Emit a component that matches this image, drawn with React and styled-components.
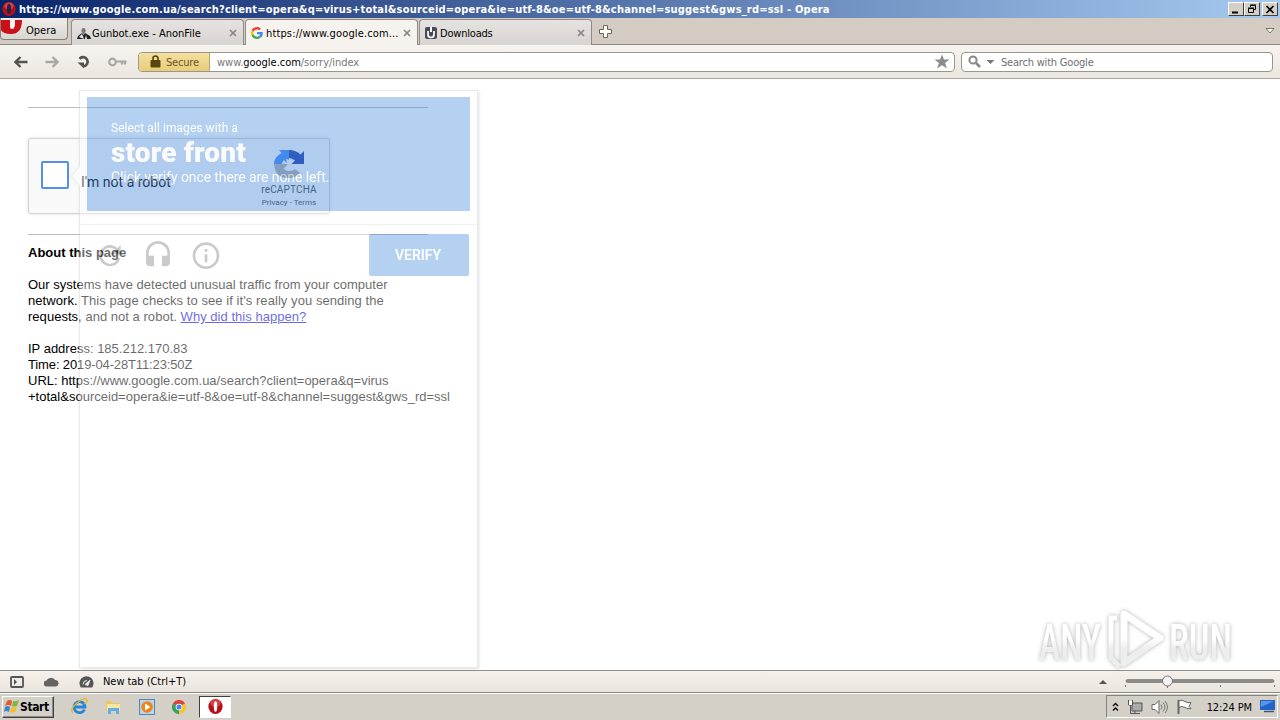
import styled, { createGlobalStyle } from "styled-components";

const OperaO = ({ size = 14 }) => (
  <svg width={size} height={size} viewBox="0 0 16 16">
    <ellipse cx="8" cy="8" rx="7.6" ry="7.9" fill="#b80f17" />
    <ellipse cx="8" cy="4.5" rx="5.5" ry="4" fill="#e86060" opacity=".6" />
    <ellipse cx="8" cy="8" rx={size > 14 ? 1.8 : 2.4} ry="5.6" fill={size > 14 ? "#fff" : "#20254f"} />
  </svg>
);

const GoogleG = () => (
  <svg width="12" height="12" viewBox="0 0 48 48">
    <path fill="#ea4335" d="M24 9.5c3.5 0 6.7 1.2 9.2 3.6l6.9-6.9C35.9 2.4 30.5 0 24 0 14.6 0 6.5 5.4 2.6 13.2l8 6.2C12.4 13.7 17.7 9.5 24 9.5z" />
    <path fill="#4285f4" d="M47 24.6c0-1.6-.2-3.1-.4-4.6H24v9h12.9c-.6 3-2.3 5.5-4.8 7.2l7.7 6C44.4 38 47 31.8 47 24.6z" />
    <path fill="#fbbc05" d="M10.5 28.6a14.5 14.5 0 0 1 0-9.2l-8-6.2a24 24 0 0 0 0 21.6l8-6.2z" />
    <path fill="#34a853" d="M24 48c6.5 0 11.9-2.1 15.9-5.8l-7.7-6c-2.2 1.5-4.9 2.3-8.2 2.3-6.3 0-11.6-4.2-13.5-9.9l-8 6.2C6.5 42.6 14.6 48 24 48z" />
  </svg>
);

const AnonIcon = () => (
  <svg width="14" height="13" viewBox="0 0 14 13">
    <path d="M4.5 3a2 2 0 0 1 4 0v2l-2 2-2-2z" fill="#777" />
    <path d="M0 12l1-3 4-3 1.500 2L8 6l5 3 1 3z" fill="#222" />
    <path d="M2 10l3-3 2 5zM8 12l1-4 1 4z" fill="#eee" />
  </svg>
);

const Close = () => (
  <svg width="8" height="8" viewBox="0 0 8 8">
    <path d="M1 1l6 6M7 1L1 7" stroke="#858585" strokeWidth="1.7" />
  </svg>
);

const Arrow = ({ flip, color }) => (
  <svg width="14" height="12" viewBox="0 0 14 12">
    <path transform={flip ? "translate(14 0) scale(-1 1)" : undefined} d="M13.5 6H2M6.5 1L1.5 6l5 5" fill="none" stroke={color} strokeWidth="2.3" />
  </svg>
);

const TABS = [
  { name: "Gunbot.exe - AnonFile", icon: <AnonIcon />, spacing: 0 },
  { name: "https://www.google.com...", icon: <GoogleG />, active: true, spacing: 0.14 },
  {
    name: "Downloads",
    spacing: -0.2,
    icon: (
      <svg width="12" height="12" viewBox="0 0 12 12">
        <rect width="12" height="12" rx="2" fill="#454b57" />
        <path d="M3 4v3.500a3 3 0 0 0 6 0V4" stroke="#fff" strokeWidth="1.7" fill="none" />
        <path d="M5 0h2v5H5z" fill="#fff" />
      </svg>
    ),
  },
];

function TitleBar() {
  return (
    <Title>
      <OperaO />
      <TitleText>https://www.google.com.ua/search?client=opera&amp;q=virus+total&amp;sourceid=opera&amp;ie=utf-8&amp;oe=utf-8&amp;channel=suggest&amp;gws_rd=ssl - Opera</TitleText>
      <WinButton><svg width="10" height="9"><path d="M1 7.500h6" stroke="#000" strokeWidth="2" /></svg></WinButton>
      <WinButton>
        <svg width="10" height="10">
          <path d="M3.5 3V1.500h5v4H7M3 1h6M1.500 4.500h5v4h-5zM1 4h6" fill="none" stroke="#000" />
        </svg>
      </WinButton>
      <WinButton $gap><svg width="10" height="9"><path d="M1.5 1l7 7M8.500 1l-7 7" stroke="#000" strokeWidth="1.6" /></svg></WinButton>
    </Title>
  );
}

function TabBar() {
  return (
    <TabStrip>
      <OperaMenu>
        <svg width="21" height="15" viewBox="0 0 21 15">
          <path d="M0 0h9v5q0 4 2 4t3-4V0h7q0 14-11 14Q2 14 0 10z" fill="#cc1018" />
          <path d="M9 0h4.500v5q0 4-2.300 4T9 5z" fill="#f6f3f0" />
        </svg>
        <Label>Opera</Label>
      </OperaMenu>
      {TABS.map((tab) => (
        <Tab key={tab.name} $active={tab.active}>
          <TabIcon>{tab.icon}</TabIcon>
          <TabName $spacing={tab.spacing}>{tab.name}</TabName>
          <Close />
        </Tab>
      ))}
      <NewTab>
        <svg width="13" height="13"><path d="M4.5.5h4v4h4v4h-4v4h-4v-4h-4v-4h4z" fill="#fffff4" stroke="#666" /></svg>
      </NewTab>
      <svg width="10" height="8"><path d="M1 1.500h8L5 6z" fill="#fffff0" stroke="#777766" /></svg>
    </TabStrip>
  );
}

function AddressBar() {
  return (
    <Toolbar>
      <NavIcons>
        <Arrow color="#55524e" />
        <Arrow flip color="#aaa7a2" />
        <svg width="15" height="14" viewBox="0 0 15 14">
          <path d="M3.5 3.800A4.600 4.600 0 1 1 7.500 11.300" fill="none" stroke="#55524e" strokeWidth="2.6" />
          <path d="M1.500 7.500h6.500v6z" fill="#55524e" />
        </svg>
        <svg width="19" height="10" viewBox="0 0 19 10">
          <circle cx="4.500" cy="5" r="3.300" fill="none" stroke="#aaa7a2" strokeWidth="2.2" />
          <path d="M8 4.500h10.500M14 5v2.500M17 5v2.500" stroke="#aaa7a2" strokeWidth="2.2" />
        </svg>
      </NavIcons>
      <UrlField>
        <Secure>
          <svg width="11" height="13" viewBox="0 0 11 13">
            <path d="M3 6V3.500a2.500 2.500 0 0 1 5 0V6" fill="none" stroke="#594711" strokeWidth="1.6" />
            <rect x=".5" y="5" width="10" height="7.500" rx="1" fill="#594711" />
          </svg>
          <Label $color="#675626" $spacing={-0.2}>Secure</Label>
        </Secure>
        <Url>www.<b>google.com</b>/sorry/index</Url>
        <svg width="16" height="15" viewBox="0 0 16 15">
          <path d="M8 .5l2 5h5.500L11 9l2 5.500-5-3.300-5 3.300L5 9 .5 5.500H6z" fill="#8c8c8c" />
        </svg>
      </UrlField>
      <SearchField>
        <svg width="14" height="14" viewBox="0 0 14 14">
          <circle cx="5" cy="5" r="3.600" fill="none" stroke="#888" strokeWidth="2" />
          <path d="M8 8l4 4" stroke="#888" strokeWidth="2.5" />
        </svg>
        <svg width="9" height="6"><path d="M.5 1h8L4.500 5z" fill="#777" /></svg>
        <Label $color="#707070" $spacing={-0.2}>Search with Google</Label>
      </SearchField>
    </Toolbar>
  );
}

const RecaptchaLogo = () => (
  <svg width="32" height="32" viewBox="0 0 32 32">
    <path d="M31 16V3l-3.500 3.500Q23 2 16 2v8q3 0 6 2.500L18.500 16z" fill="#1c3aa9" />
    <path d="M16 2H6l2.500 3Q1 9 1 16h8q0-2 2-4l2.500 3V10.500L16 12z" fill="#4285f4" />
    <path d="M1 16q1 14 14 14 8 0 12-5l-5-4q-2 2-6 2-4 0-5-2.500l4-4.500z" fill="#ababab" />
  </svg>
);

function Captcha() {
  return (
    <CaptchaBox>
      <CheckBox />
      <RobotText>I'm not a robot</RobotText>
      <Brand>
        <RecaptchaLogo />
        <BrandName>reCAPTCHA</BrandName>
        <BrandLinks>Privacy - Terms</BrandLinks>
      </Brand>
    </CaptchaBox>
  );
}

function Challenge() {
  return (
    <Popup>
      <Pointer viewBox="0 0 10 22"><path d="M10 1L1 11l9 10" fill="#fff" stroke="#ccc" /></Pointer>
      <Prompt>
        <PromptLine>Select all images with a</PromptLine>
        <PromptTarget>store front</PromptTarget>
        <PromptHint>Click verify once there are none left.</PromptHint>
      </Prompt>
      <Controls>
        <svg width="32" height="32" viewBox="0 0 24 24">
          <path d="M17.65 6.850A8 8 0 1 0 19.730 14.500h-2.080A6 6 0 1 1 12 6.500c1.660 0 3.140.69 4.220 1.780L13 11.500h7v-7z" fill="#808080" />
        </svg>
        <svg width="32" height="32" viewBox="0 0 24 24">
          <path d="M12 1.500a9 9 0 0 0-9 9v7a3 3 0 0 0 3 3h3v-8H5v-2a7 7 0 0 1 14 0v2h-4v8h3a3 3 0 0 0 3-3v-7a9 9 0 0 0-9-9z" fill="#808080" />
        </svg>
        <svg width="32" height="32" viewBox="0 0 24 24">
          <circle cx="12" cy="12.500" r="9" fill="none" stroke="#808080" strokeWidth="2" />
          <path d="M11 7.500h2v2h-2zM11 11.500h2v6h-2z" fill="#808080" />
        </svg>
        <Verify>VERIFY</Verify>
      </Controls>
    </Popup>
  );
}

function Page() {
  return (
    <PageArea>
      <Content>
        <Rule />
        <Captcha />
        <Rule />
        <Heading>About this page</Heading>
        <Line $spacing={0.01}>Our systems have detected unusual traffic from your computer</Line>
        <Line $spacing={0.06}>network. This page checks to see if it's really you sending the</Line>
        <Line $spacing={0.03}>requests, and not a robot. <a>Why did this happen?</a></Line>
        <Line />
        <Line>IP address: 185.212.170.83</Line>
        <Line $spacing={-0.13}>Time: 2019-04-28T11:23:50Z</Line>
        <Line>URL: https://www.google.com.ua/search?client=opera&amp;q=virus</Line>
        <Line $spacing={0.01}>+total&amp;sourceid=opera&amp;ie=utf-8&amp;oe=utf-8&amp;channel=suggest&amp;gws_rd=ssl</Line>
      </Content>
      <Challenge />
      <Watermark viewBox="0 0 204 68">
        <defs>
          <linearGradient id="fade" gradientUnits="userSpaceOnUse" x1="0" y1="0" x2="0" y2="68">
            <stop offset=".45" stopColor="#fff" />
            <stop offset=".6" stopColor="#ededed" />
          </linearGradient>
        </defs>
        <text x="5" y="52" textLength="62" lengthAdjust="spacingAndGlyphs">ANY</text>
        <path d="M90 6l36 24-36 25z" fill="none" stroke="url(#fade)" strokeWidth="7" strokeLinejoin="round" />
        <path d="M83 10h-6v40l9 9" fill="none" stroke="url(#fade)" strokeWidth="5" />
        <text x="135" y="52" textLength="63" lengthAdjust="spacingAndGlyphs">RUN</text>
      </Watermark>
    </PageArea>
  );
}

function StatusBar() {
  return (
    <Status>
      <StatusIcons>
        <svg width="14" height="12"><rect x="1" y="1" width="12" height="10" rx="1" fill="none" stroke="#555" strokeWidth="1.8" /><path d="M4 3l3 3-3 3z" fill="#555" /></svg>
        <svg width="15" height="11"><path d="M3 10.500a3 3 0 0 1-.5-6A5 5 0 0 1 11 4a3.300 3.300 0 0 1 1 6.500z" fill="#666462" /></svg>
        <svg width="15" height="12"><path d="M2 11.500A7 7 0 1 1 13 11.500z" fill="#555" /><path d="M6 8.500L11 4l-2 5.500z" stroke="#eee" fill="#eee" strokeWidth=".8" /><path d="M4 8.500a4 4 0 0 1 4-4" stroke="#eee" fill="none" /></svg>
      </StatusIcons>
      <Label $spacing={-0.05}>New tab (Ctrl+T)</Label>
      <Zoom>
        <svg width="8" height="5"><path d="M0 5l4-4 4 4z" fill="#555" /></svg>
        <svg width="152" height="18" viewBox="0 0 152 18">
          <rect x="2" y="6.500" width="148" height="3" rx="1.500" fill="#8c8a87" stroke="#716f6c" strokeWidth=".6" />
          <path d="M1.5 12v2M43.500 12v3M96.500 12v2M150.500 12v2" stroke="#777" />
          <circle cx="43.500" cy="8" r="5" fill="#f4f3f1" stroke="#777" />
        </svg>
      </Zoom>
    </Status>
  );
}

function Taskbar() {
  return (
    <TaskRow>
      <Start>
        <svg width="16" height="15" viewBox="0 0 16 15">
          <path d="M3 2q3-2 5 0L7 7Q4 5 1 7z" fill="#e65a26" />
          <path d="M9 2q3 1 6-1l-2 6q-3 1-5 0z" fill="#7db83c" />
          <path d="M1 8q3-2 5 0l-1 5q-3-2-5 0z" fill="#3e83d0" />
          <path d="M7 8q3 1 6 0l-2 5q-3 1-5 0z" fill="#f7bd2c" />
        </svg>
        Start
      </Start>
      <QuickLaunch>
        <svg width="17" height="17" viewBox="0 0 17 17">
          <path d="M13.5 11.500A5.500 5.500 0 1 1 14 9H4" fill="none" stroke="#2587d4" strokeWidth="2.8" />
          <path d="M2 15Q-2 12 6 5t10-3Q17 4 13 6" fill="none" stroke="#e2b72b" strokeWidth="1.3" />
        </svg>
        <svg width="17" height="16" viewBox="0 0 17 16">
          <path d="M1 2h5l1 2h8v8H1z" fill="#e9c85c" />
          <path d="M2 5h13v7H2z" fill="#f8e7a0" />
          <path d="M3 15V9h11v6h-3v-3H6v3z" fill="#65aede" />
        </svg>
        <svg width="16" height="16" viewBox="0 0 16 16">
          <rect x=".5" y=".5" width="15" height="15" fill="#b9d5ee" stroke="#4c88bf" />
          <circle cx="8" cy="8" r="5.800" fill="#ef8314" />
          <path d="M6 4.500l5.500 3.500L6 11.500z" fill="#fff" />
        </svg>
        <svg width="14" height="14" viewBox="0 0 14 14">
          <path d="M7 7L.9 3.500A7 7 0 0 1 13.100 3.500z" fill="#dc4437" />
          <path d="M7 7l6.100-3.500A7 7 0 0 1 7 14z" fill="#f5c52b" />
          <path d="M7 7v7A7 7 0 0 1 .9 3.500z" fill="#35a457" />
          <circle cx="7" cy="7" r="3.300" fill="#fff" />
          <circle cx="7" cy="7" r="2.500" fill="#4285f4" />
        </svg>
      </QuickLaunch>
      <ActiveTask><OperaO size={15} /></ActiveTask>
      <Tray>
        <svg width="7" height="10"><path d="M1 4l2.500-2.500L6 4M1 8.500L3.500 6 6 8.500" fill="none" stroke="#000" strokeWidth="1.3" /></svg>
        <svg width="16" height="16">
          <path d="M5 4h10v8H5z" fill="#aaa" stroke="#555" />
          <path d="M1.5 1v5h4V1M3.500 6v8.500H13M8 14.500V12" fill="none" stroke="#555" />
          <path d="M2 2h3v4H2z" fill="#fff" />
        </svg>
        <svg width="17" height="14">
          <path d="M1 4.500h3l4-4v13l-4-4H1z" fill="#fff" stroke="#666" />
          <path d="M10 4.500q2 2.500 0 5M12 2.500q4 4.500 0 9M14 1q5 6 0 12" fill="none" stroke="#777" />
        </svg>
        <svg width="17" height="15">
          <path d="M2.5 1v14" stroke="#666" strokeWidth="2" />
          <path d="M3 1.500q3-1 6 1t6 1l-2 4 2 2q-3 1-6-1t-6 0z" fill="#fff" stroke="#666" />
        </svg>
        <Clock>12:24 PM</Clock>
        <svg width="15" height="13"><rect width="15" height="10" fill="#2264c8" /><path d="M1 1h13L1 7z" fill="#5796e4" /><path d="M4 11.500h10" stroke="#38567a" strokeWidth="1.5" /></svg>
      </Tray>
    </TaskRow>
  );
}

export default function App() {
  return (
    <>
      <GlobalStyle />
      <Screen>
        <TitleBar />
        <TabBar />
        <AddressBar />
        <Page />
        <StatusBar />
        <Taskbar />
      </Screen>
    </>
  );
}

const GlobalStyle = createGlobalStyle`
  * { box-sizing: border-box; }
  body { margin: 0; overflow: hidden; }
  svg { display: block; flex: none; }
`;

const Screen = styled.div`
  width: 1280px;
  height: 720px;
  display: grid;
  grid-template-rows: 18px 27px 34px 591px 22px 28px;
  font-family: "DejaVu Sans Condensed", "DejaVu Sans", sans-serif;
  font-stretch: condensed;
  font-size: 11px;
  white-space: nowrap;
  overflow: hidden;
`;

const Label = styled.span`
  color: ${({ $color }) => $color || "#000"};
  letter-spacing: ${({ $spacing }) => $spacing || 0}px;
`;

const Title = styled.div`
  display: flex;
  align-items: center;
  padding: 0 2px;
  background: linear-gradient(90deg, #0a246a, #a6caf0);
`;

const TitleText = styled.div`
  flex: 1;
  margin-left: 3px;
  color: #fff;
  font-weight: bold;
  letter-spacing: 0.19px;
`;

const WinButton = styled.div`
  width: 16px;
  height: 14px;
  margin-left: ${({ $gap }) => ($gap ? 2 : 0)}px;
  display: grid;
  place-items: center;
  background: #d4d0c8;
  border: 1px solid;
  border-color: #fff #404040 #404040 #fff;
`;

const TabStrip = styled.div`
  display: flex;
  align-items: center;
  padding-right: 5px;
  background: #d4ccc2;
  border-bottom: 1px solid #8d8a86;
`;

const OperaMenu = styled.div`
  width: 68px;
  height: 22px;
  margin: -4px 3px 0 0;
  padding-top: 2px;
  display: flex;
  gap: 4px;
  align-items: center;
  border: 1px solid #85827d;
  border-top: 0;
  border-radius: 0 0 4px 4px;
  background: linear-gradient(#f1eeea, #d9d5cf);
  svg { align-self: flex-start; }
  ${Label} { padding-top: 1px; }
`;

const Tab = styled.div`
  width: 173px;
  height: ${({ $active }) => ($active ? 27 : 26)}px;
  align-self: flex-start;
  margin: 1px 1px 0 0;
  padding: ${({ $active }) => ($active ? 0 : 1)}px 6px 0 5px;
  display: flex;
  align-items: center;
  border: 1px solid #8f8c88;
  border-bottom: 0;
  border-radius: 4px 4px 0 0;
  background: ${({ $active }) => ($active ? "#f6f3ee" : "linear-gradient(#e5e3e1, #d8d4d0)")};
`;

const TabIcon = styled.span`
  width: 14px;
  margin-right: 1px;
`;

const TabName = styled(Label)`
  flex: 1;
`;

const NewTab = styled.div`
  flex: 1;
  margin-left: 6px;
`;

const Toolbar = styled.div`
  display: flex;
  align-items: center;
  padding: 0 7px 0 14px;
  background: linear-gradient(#f7f4f0, #ebe6df);
  border-bottom: 1px solid #aaa69f;
`;

const NavIcons = styled.div`
  width: 124px;
  display: flex;
  align-items: center;
  gap: 17px;
`;

const Field = styled.div`
  height: 20px;
  display: flex;
  align-items: center;
  background: #fff;
  border: 1px solid #999690;
  border-radius: 4px;
  overflow: hidden;
`;

const UrlField = styled(Field)`
  width: 817px;
  padding-right: 4px;
`;

const Secure = styled.div`
  width: 71px;
  height: 100%;
  padding-left: 11px;
  display: flex;
  align-items: center;
  gap: 5px;
  background: linear-gradient(#f3df9f, #e8cc78);
  border-right: 1px solid #b8a56f;
  ${Label} { padding-top: 1px; }
`;

const Url = styled.div`
  flex: 1;
  padding: 1px 0 0 7px;
  color: #777;
  letter-spacing: -0.03px;
  b { font-weight: normal; color: #000; }
`;

const SearchField = styled(Field)`
  width: 312px;
  margin-left: 6px;
  padding-left: 6px;
  gap: 4px;
  ${Label} { margin-left: 2px; padding-top: 1px; }
`;

const PageArea = styled.div`
  position: relative;
  background: #fff;
`;

const Content = styled.div`
  width: 400px;
  margin-left: 28px;
  padding-top: 28px;
  font-family: "Liberation Sans", Arial, sans-serif;
  font-size: 13px;
  line-height: 16px;
`;

const Rule = styled.div`
  height: 1px;
  background: #bbb;
`;

const CaptchaBox = styled.div`
  width: 302px;
  height: 76px;
  margin: 30px 0 20px;
  padding-left: 12px;
  display: flex;
  align-items: center;
  font-family: Roboto, sans-serif;
  font-stretch: normal;
  background: #f9f9f9;
  border: 1px solid #d3d3d3;
  border-radius: 3px;
  box-shadow: 0 0 3px 1px rgba(0, 0, 0, 0.08);
`;

const CheckBox = styled.div`
  width: 28px;
  height: 28px;
  margin-bottom: 2px;
  background: #fff;
  border: 2px solid #5290ec;
  border-radius: 2px;
`;

const RobotText = styled.div`
  margin: 11px 0 0 12px;
  width: 168px;
  font-size: 14px;
`;

const Brand = styled.div`
  width: 80px;
  margin-top: 5px;
  display: flex;
  flex-direction: column;
  align-items: center;
  color: #444;
`;

const BrandName = styled.div`
  margin-top: 4px;
  font-size: 10px;
  line-height: 12px;
  letter-spacing: 0.15px;
`;

const BrandLinks = styled.div`
  font-size: 8px;
  line-height: 13px;
`;

const Heading = styled.div`
  margin: 10px 0 16px;
  font-weight: bold;
`;

const Line = styled.div`
  height: 16px;
  letter-spacing: ${({ $spacing }) => $spacing || 0}px;
  a { color: #0000cc; text-decoration: underline; }
`;

const Popup = styled.div`
  position: absolute;
  left: 79px;
  top: 11px;
  width: 399px;
  height: 578px;
  padding: 7px;
  background: #fff;
  border: 1px solid #ccc;
  box-shadow: 1px 1px 3px rgba(0, 0, 0, 0.3);
  opacity: 0.41;
  font-family: Roboto, sans-serif;
  font-stretch: normal;
`;

const Pointer = styled.svg`
  position: absolute;
  left: -10px;
  top: 74px;
  width: 10px;
  height: 22px;
`;

const Prompt = styled.div`
  width: 383px;
  height: 114px;
  margin-top: -1px;
  padding: 22px 24px;
  color: #fff;
  background: #4a90e2;
`;

const PromptLine = styled.div`
  font-size: 12px;
  line-height: 18px;
  letter-spacing: 0.06px;
`;

const PromptTarget = styled.div`
  font-size: 28px;
  font-weight: 900;
  line-height: 32px;
  letter-spacing: 0.15px;
`;

const PromptHint = styled.div`
  font-size: 14px;
  line-height: 16px;
  letter-spacing: -0.09px;
`;

const Controls = styled.div`
  margin: 13px -7px 0;
  padding: 9px 8px 0 14px;
  display: flex;
  align-items: center;
  gap: 16px;
  border-top: 1px solid #dfdfdf;
`;

const Verify = styled.div`
  width: 100px;
  height: 42px;
  margin-left: auto;
  padding-right: 2px;
  display: grid;
  place-items: center;
  color: #fff;
  font-size: 14px;
  font-weight: 600;
  background: #4a90e2;
  border-radius: 2px;
`;

const Watermark = styled.svg`
  position: absolute;
  left: 1034px;
  top: 529px;
  width: 204px;
  height: 68px;
  overflow: visible;
  fill: url(#fade);
  font-family: Roboto, sans-serif;
  font-size: 50px;
  font-weight: 500;
  filter: drop-shadow(0 0 2px rgba(0, 0, 0, 0.3));
`;

const Status = styled.div`
  display: flex;
  align-items: center;
  padding: 0 4px 0 10px;
  background: linear-gradient(#f5f0eb, #ebe5df);
  border-top: 1px solid #94918d;
`;

const StatusIcons = styled.div`
  width: 93px;
  display: flex;
  align-items: center;
  gap: 20px;
`;

const Zoom = styled.div`
  margin-left: auto;
  display: flex;
  align-items: center;
  gap: 17px;
`;

const TaskRow = styled.div`
  display: flex;
  align-items: center;
  padding-left: 2px;
  background: #d4d0c8;
  border-top: 1px solid #8b8883;
  box-shadow: inset 0 1px #fff;
`;

const Start = styled.div`
  width: 52px;
  height: 22px;
  padding-left: 1px;
  display: flex;
  align-items: center;
  font-size: 12px;
  font-weight: bold;
  letter-spacing: -0.4px;
  border: 1px solid;
  border-color: #fff #404040 #404040 #fff;
  box-shadow: inset -1px -1px #8d8a84;
`;

const QuickLaunch = styled.div`
  margin-left: 17px;
  width: 128px;
  display: flex;
  align-items: center;
  gap: 17px;
`;

const ActiveTask = styled.div`
  width: 32px;
  height: 22px;
  display: grid;
  place-items: center;
  background: #fff;
  border: 1px solid;
  border-color: #404040 #fff #fff #404040;
`;

const Tray = styled.div`
  width: 172px;
  height: 23px;
  margin: 0 2px 0 auto;
  padding: 0 2px 0 5px;
  display: flex;
  align-items: center;
  gap: 8px;
  border: 1px solid;
  border-color: #85827c #fff #fff #85827c;
`;

const Clock = styled.span`
  margin-left: auto;
  padding-top: 1px;
  letter-spacing: -0.1px;
`;
